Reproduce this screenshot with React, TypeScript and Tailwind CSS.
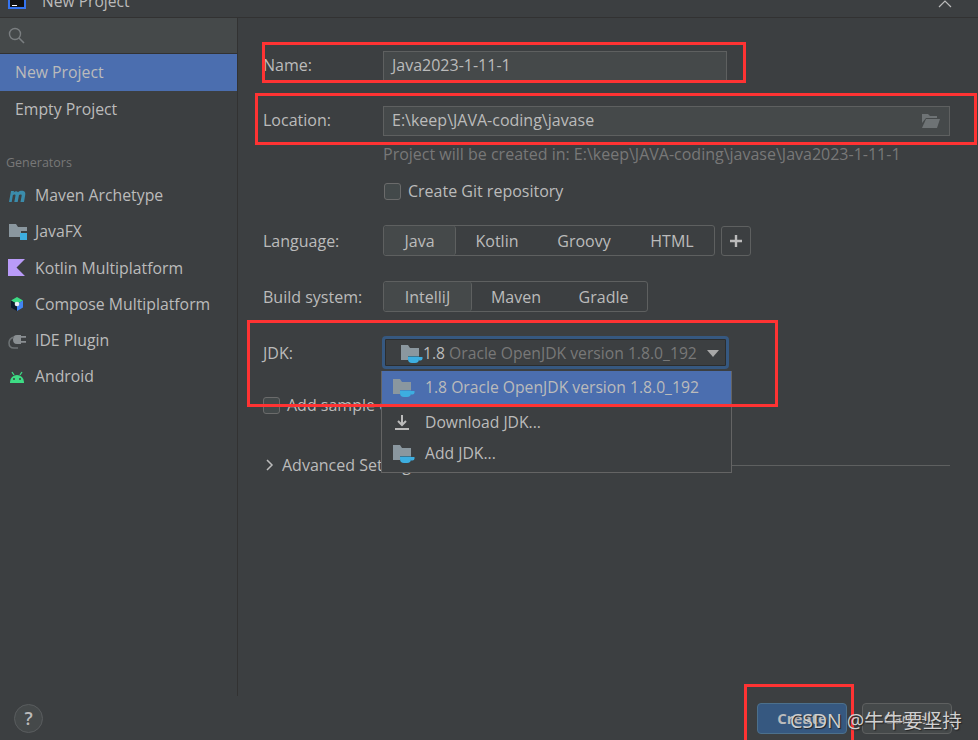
import React from "react";

const FolderCup = () => (
	<svg width="24" height="20" viewBox="0 0 24 20">
		<path d="M1 1h7l2 3h9v8H8v4H1z" fill="#8a979f" />
		<path d="M8 12.500h11v2.500a4 4 0 0 1-4 4h-3a4 4 0 0 1-4-4z" fill="#3daee0" />
		<path d="M19 13h3.500v1.500a2 2 0 0 1-2 2H19z" fill="#3daee0" />
	</svg>
);

const sidebarItems = [
	{
		label: "Maven Archetype",
		icon: (
			<svg width="20" height="14" viewBox="0 0 20 14">
				<path d="M1 13 3 2h3l-.3 1.400C7 2 9 1.500 10 3.300 11.500 1.700 14 1.500 15.500 2c2 .8 2 2.500 1.700 4L16 13h-3.500l1.200-6.500c.2-1.200-1.600-1.500-2.700-.5L9.700 13H6.300l1.200-6.500c.2-1.300-1.500-1.400-2.600-.5L3.700 13z" fill="#3b8cab" />
			</svg>
		),
	},
	{
		label: "JavaFX",
		icon: (
			<svg width="20" height="18" viewBox="0 0 20 18">
				<path d="M1 1h7l2 3h9v4h-6v6H1z" fill="#8a979f" />
				<path d="M12 10h7v7h-7z" fill="#3daee0" />
			</svg>
		),
	},
	{
		label: "Kotlin Multiplatform",
		icon: (
			<svg width="18" height="18" viewBox="0 0 18 18">
				<path d="M0 0h17L8.500 8.500 17 17H0z" fill="#b99bf8" />
			</svg>
		),
	},
	{
		label: "Compose Multiplatform",
		icon: (
			<svg width="18" height="18" viewBox="0 0 18 18">
				<path d="M9 1l6 3.500-6 3.500-6-3.500z" fill="#3ddc84" />
				<path d="M15 4.500v7L9 15V8z" fill="#4285f4" />
				<path d="M3 4.500v7L9 15V8z" fill="#0d1b2a" />
				<circle cx="9" cy="8" r="2.300" fill="#e8eef2" />
			</svg>
		),
	},
	{
		label: "IDE Plugin",
		icon: (
			<svg width="20" height="18" viewBox="0 0 20 18">
				<path d="M9 3h4v9H9C6 12 5 10 5 7.500S6 3 9 3z" fill="#8a8f92" />
				<path d="M13 4h5v1.800h-5zM13 9h5v1.800h-5z" fill="#8a8f92" />
				<path d="M6 5C3 6 1 8 1 11c0 3 2 5 5 5h4" fill="none" stroke="#6e7375" strokeWidth="1.500" />
			</svg>
		),
	},
	{
		label: "Android",
		icon: (
			<svg width="18" height="14" viewBox="0 0 18 14">
				<path d="M2 12a7 7 0 0 1 14 0v1H2z" fill="#3ddc84" />
				<path d="M4 2l2 3M14 2l-2 3" stroke="#3ddc84" strokeWidth="1.300" />
				<circle cx="6" cy="9" r="1" fill="#3c3f41" />
				<circle cx="12" cy="9" r="1" fill="#3c3f41" />
			</svg>
		),
	},
];

const Segmented = ({ items, widths }: { items: string[]; widths: string[] }) => (
	<div className="flex h-[31px] border border-[#5e6060] rounded-[3px]">
		{items.map((item, i) => (
			<div
				key={item}
				className={`flex items-center justify-center ${widths[i]} ${
					i === 0 ? "bg-[#45494a] border-r border-[#5e6060] rounded-[3px]" : ""
				}`}
			>
				{item}
			</div>
		))}
	</div>
);

const Checkbox = () => (
	<div className="w-[17px] h-[17px] bg-[#43494a] border border-[#6b6b6b] rounded-[3px] shrink-0" />
);

export default function App() {
	return (
		<div
			className="relative w-[978px] h-[740px] overflow-hidden bg-[#3c3f41] text-[#bbbbbb] text-[16px] flex flex-col"
			style={{ fontFamily: '"Open Sans", "Noto Sans", sans-serif' }}
		>
			{/* title bar, cut off at the top of the picture */}
			<div className="h-[18px] shrink-0 border-b border-[#323232] overflow-hidden flex items-start pl-2 pr-[26px]">
				<div className="w-[18px] h-[9px] border-2 border-t-0 border-[#3574f0] bg-[#111111] shrink-0 flex items-end pl-[2px] pb-[1px]">
					<div className="w-[5px] h-[1px] bg-white" />
				</div>
				<div className="ml-4 -mt-[9px] leading-5 text-[15.600px] text-[#bbbbbb]">New Project</div>
				<svg className="ml-auto" width="14" height="8" viewBox="0 0 14 8">
					<path d="M1 7 7 1l6 6" fill="none" stroke="#bbbbbb" strokeWidth="1.200" />
				</svg>
			</div>

			<div className="flex h-[678px] shrink-0">
				{/* sidebar */}
				<aside className="w-[238px] shrink-0 border-r border-[#323232] flex flex-col text-[15.800px]">
					<div className="h-[36px] bg-[#45494a] border-b border-[#323232] flex items-center pl-2">
						<svg width="17" height="17" viewBox="0 0 17 17">
							<circle cx="7" cy="7" r="5.500" fill="none" stroke="#7a7e80" strokeWidth="1.400" />
							<path d="M11 11l5 5" stroke="#7a7e80" strokeWidth="1.600" />
						</svg>
					</div>
					<div className="h-[37px] bg-[#4b6eaf] flex items-center pl-[15px] pt-[1px]">New Project</div>
					<div className="h-[37px] flex items-center pl-[15px] pt-[1px]">Empty Project</div>
					<div className="mt-[25px] pl-[6px] text-[12.500px] leading-5 text-[#787878]">Generators</div>
					<div className="mt-[5px] flex flex-col">
						{sidebarItems.map((item) => (
							<div key={item.label} className="h-[36.200px] flex items-center">
								<div className="w-[35px] pl-[8px] shrink-0 flex items-center">{item.icon}</div>
								{item.label}
							</div>
						))}
					</div>
				</aside>

				{/* form */}
				<main className="flex-1 pl-[25px] pr-[28px] pt-[33px] flex flex-col">
					<div className="flex items-center h-[30px]">
						<div className="w-[120px] shrink-0 -mt-[2px]">Name:</div>
						<div className="w-[344px] h-[30px] flex items-center bg-[#45494a] border border-[#5e6060] px-2 pb-[2px]">
							Java2023-1-11-1
						</div>
					</div>
					<div className="flex items-center h-[30px] mt-[25px]">
						<div className="w-[120px] shrink-0 -mt-[2px]">Location:</div>
						<div className="flex-1 h-[30px] flex items-center justify-between bg-[#45494a] border border-[#5e6060] px-2">
							<span className="-mt-[2px]">E:\keep\JAVA-coding\javase</span>
							<svg width="20" height="16" viewBox="0 0 20 16">
								<path d="M1 1h6l2 2h7v2H5L1 10z" fill="#6e7375" />
								<path d="M5 6h14l-3 9H1z" fill="#6e7375" />
							</svg>
						</div>
					</div>
					<div className="ml-[120px] mt-[8px] leading-5 text-[#787878]">
						Project will be created in: E:\keep\JAVA-coding\javase\Java2023-1-11-1
					</div>
					<div className="ml-[121px] mt-[17px] flex items-center gap-[7px] h-5">
						<Checkbox />
						Create Git repository
					</div>
					<div className="flex items-center mt-[24px]">
						<div className="w-[120px] shrink-0">Language:</div>
						<Segmented
							items={["Java", "Kotlin", "Groovy", "HTML"]}
							widths={["w-[72px]", "w-[82px]", "w-[92px]", "w-[84px]"]}
						/>
						<div className="ml-[6px] w-[30px] h-[30px] flex items-center justify-center border border-[#5e6060] rounded-[3px]">
							<svg width="14" height="14" viewBox="0 0 14 14">
								<path d="M7 1v12M1 7h12" stroke="#bbbbbb" strokeWidth="2.400" />
							</svg>
						</div>
					</div>
					<div className="flex items-center mt-[25px]">
						<div className="w-[120px] shrink-0">Build system:</div>
						<Segmented
							items={["IntelliJ", "Maven", "Gradle"]}
							widths={["w-[88px]", "w-[88px]", "w-[87px]"]}
						/>
					</div>
					<div className="flex items-center mt-[24px]">
						<div className="w-[119px] shrink-0">JDK:</div>
						<div className="w-[347px] h-[33px] flex items-center pl-[15px] pr-[7px] pt-[2px] text-[15.700px] border-[3px] border-[#365880] rounded-[4px] bg-[#3c3f41] ring-1 ring-inset ring-[#2b2d2e] whitespace-nowrap">
							<FolderCup />
							<span className="-ml-[1px]">1.8</span>
							<span className="ml-[4px] text-[#787878]">Oracle OpenJDK version 1.8.0_192</span>
							<svg className="ml-auto" width="12" height="8" viewBox="0 0 12 8">
								<path d="M0 0h12L6 7z" fill="#a8a8a8" />
							</svg>
						</div>
					</div>
					<div className="flex items-center gap-[7px] mt-[26px] h-5">
						<Checkbox />
						Add sample code
					</div>
					<div className="flex items-center mt-[40px] h-5">
						<svg width="10" height="12" viewBox="0 0 10 12" className="mr-[7px] ml-[2px]">
							<path d="M2 1l5 5-5 5" fill="none" stroke="#bbbbbb" strokeWidth="1.500" />
						</svg>
						<span className="whitespace-nowrap">Advanced Settings</span>
						<div className="flex-1 border-t border-[#5e6060] ml-2" />
					</div>
				</main>
			</div>

			{/* footer */}
			<footer className="flex-1 flex items-center pl-[14px] pr-[26px] pt-[1px]">
				<div className="w-[29px] h-[29px] rounded-full bg-[#45494a] border border-[#5a5d5f] flex items-center justify-center font-semibold text-[18px]">
					?
				</div>
				<div className="ml-auto w-[90px] h-[31px] flex items-center justify-center rounded-[4px] bg-[#365880] border border-[#4c708c] font-bold text-[15px]">
					Create
				</div>
				<div className="ml-[15px] w-[90px] h-[31px] flex items-center justify-center rounded-[4px] bg-[#45494a] border border-[#5e6060] text-[15px]">
					Cancel
				</div>
			</footer>

			{/* open combo popup */}
			<div className="absolute left-[381px] top-[371px] w-[351px] h-[102px] bg-[#3c3f41] border border-[#646464] border-t-0 text-[15.700px]">
				<div className="h-[34px] bg-[#4b6eaf] border-b border-[#2f4468] flex items-center pl-[10px]">
					<FolderCup />
					<span className="ml-[9px]">1.8 Oracle OpenJDK version 1.8.0_192</span>
				</div>
				<div className="h-[35px] flex items-center pl-[11px]">
					<svg width="18" height="18" viewBox="0 0 18 18">
						<path d="M9 1v9M5 7l4 4 4-4M2 15h14" fill="none" stroke="#bbbbbb" strokeWidth="2" />
					</svg>
					<span className="ml-[14px]">Download JDK...</span>
				</div>
				<div className="h-[27px] flex items-center pl-[10px]">
					<FolderCup />
					<span className="ml-[9px]">Add JDK...</span>
				</div>
			</div>

			{/* red marks drawn on the screenshot */}
			<div className="absolute left-[262px] top-[42px] w-[484px] h-[41px] border-[3px] border-[#ff3333]" />
			<div className="absolute left-[255px] top-[93px] w-[722px] h-[52px] border-[3px] border-[#ff3333]" />
			<div className="absolute left-[247px] top-[320px] w-[531px] h-[87px] border-[3px] border-[#ff3333]" />
			<div className="absolute left-[744px] top-[684px] w-[110px] h-[60px] border-[3px] border-[#ff3333]" />

			{/* watermark */}
			<div
				className="absolute left-[790px] top-[707px] text-[19.500px] leading-7 text-[#d0d0d0] whitespace-nowrap [text-shadow:1px_1px_1px_#222]"
				style={{ fontFamily: '"Open Sans", "Noto Sans CJK SC", sans-serif' }}
			>
				CSDN @牛牛要坚持
			</div>
		</div>
	);
}
